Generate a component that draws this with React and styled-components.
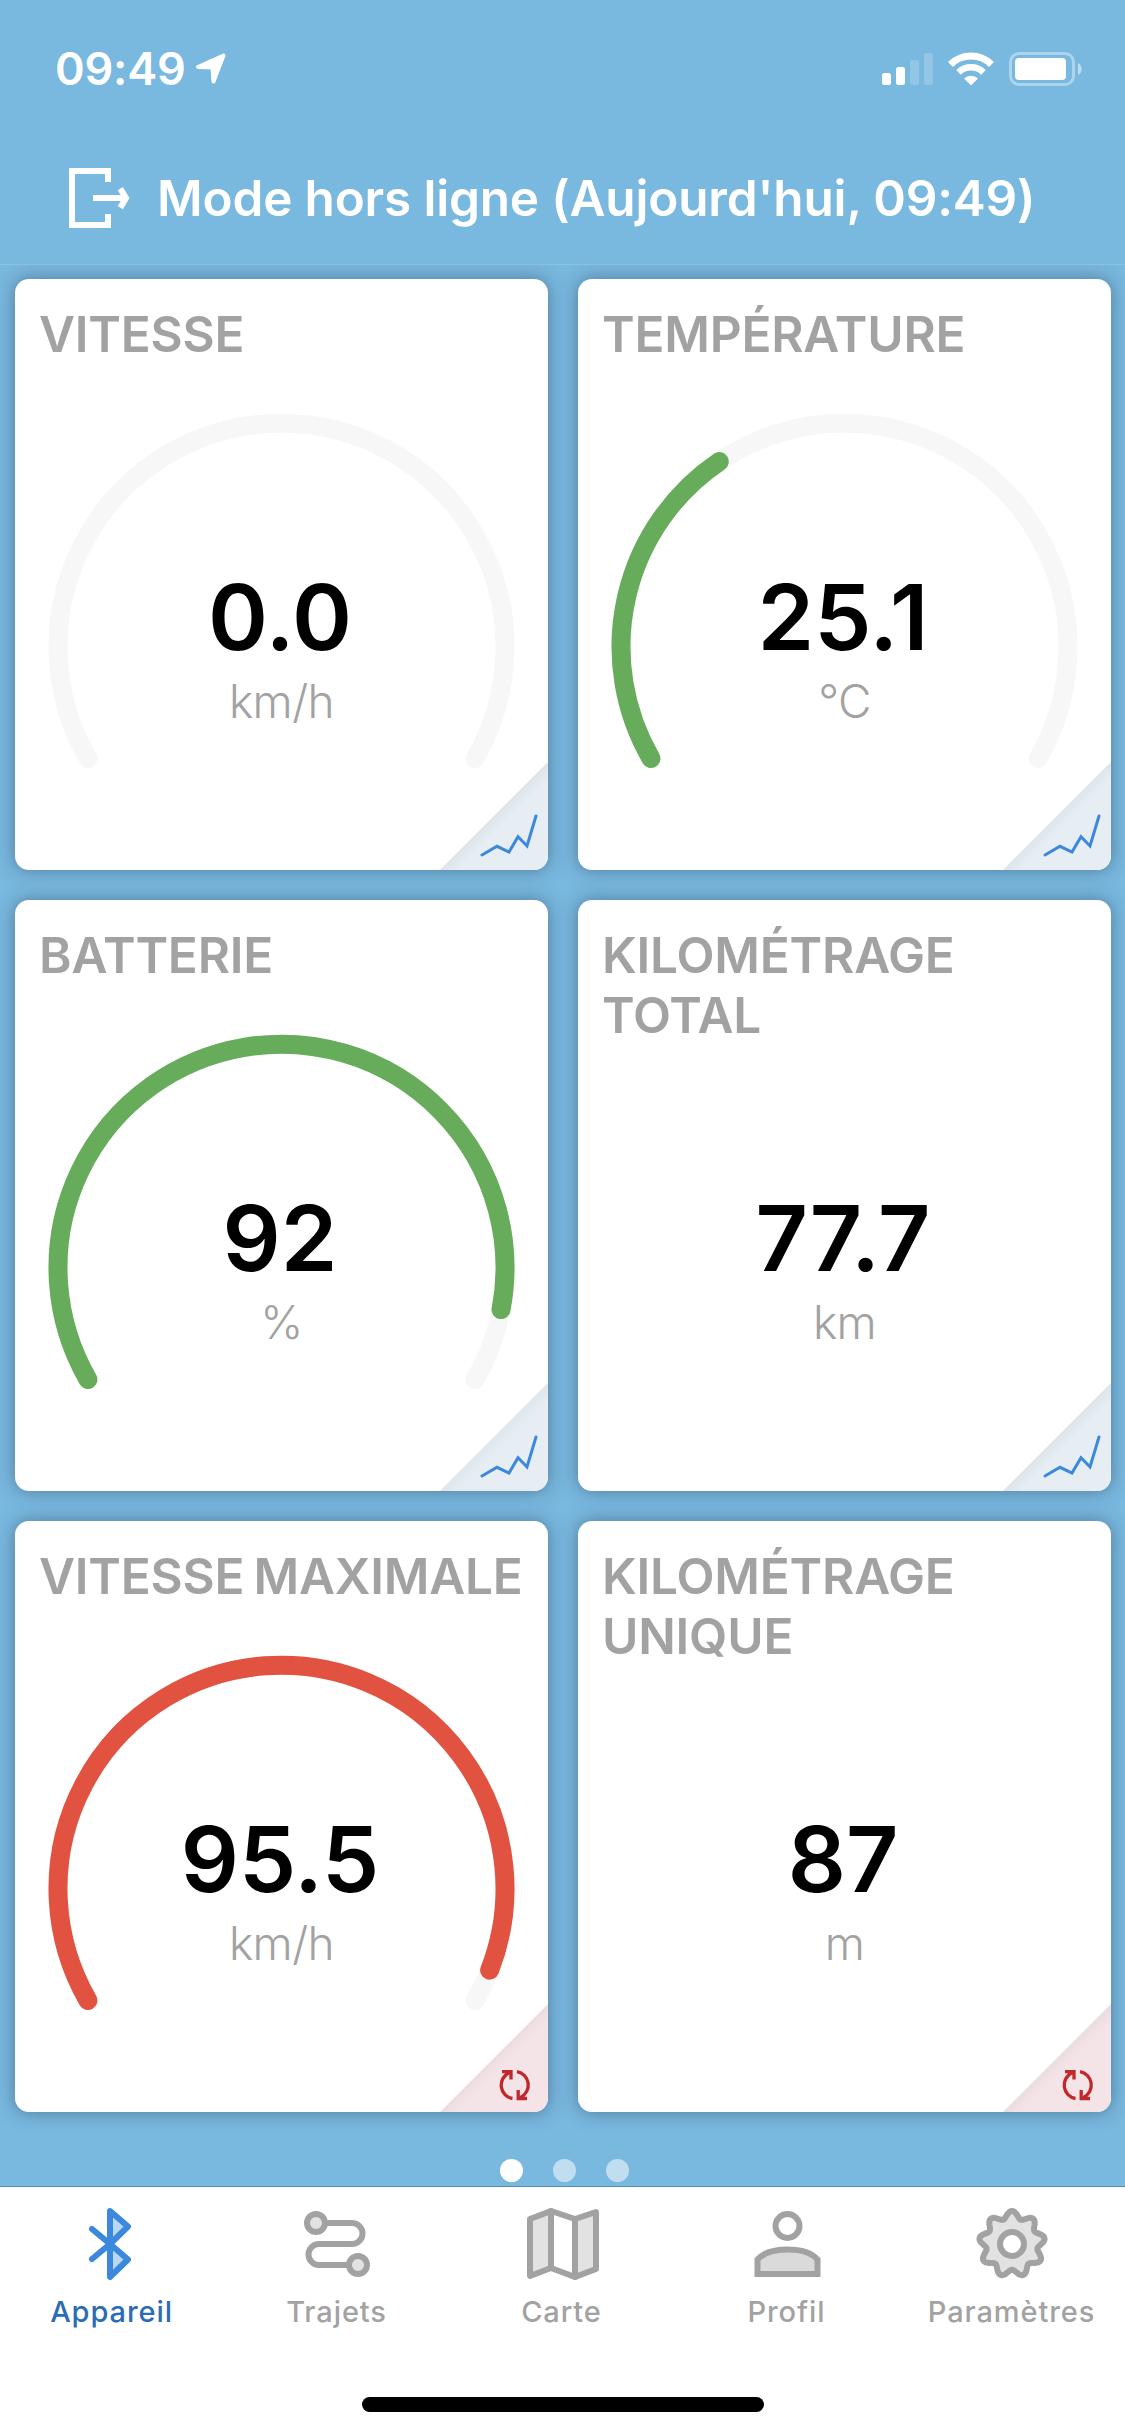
import React from 'react'
import styled, { createGlobalStyle } from 'styled-components'

const GlobalStyle=createGlobalStyle`
*{
  box-sizing:border-box;
}
body{
  margin:0;
  background:#79b8df;
  font-family:Inter, "Liberation Sans", sans-serif;
}
`
const Screen=styled.div`
width:1125px;
height:2436px;
display:flex;
flex-direction:column;
background:#79b8df;
overflow:hidden;
`
const StatusBar=styled.div`
height:132px;
padding:0 43px 0 55px;
display:flex;
align-items:center;
justify-content:space-between;
color:white;
`
const Clock=styled.div`
display:flex;
align-items:center;
gap:9px;
font-size:45px;
line-height:54px;
font-weight:600;
letter-spacing:-0.2px;
padding-top:6px;
`
const StatusIcons=styled.div`
display:flex;
align-items:center;
gap:15px;
padding-top:6px;
`
const Header=styled.header`
position:relative;
z-index:1;
height:133px;
padding:0 0 0 69px;
display:flex;
align-items:center;
gap:27px;
background:#79b8df;
border-bottom:1px solid #8bc0e1;
color:white;
`
const HeaderTitle=styled.h1`
margin:0;
font-size:49.5px;
line-height:60px;
font-weight:600;
letter-spacing:-0.18px;
white-space:nowrap;
`
const Grid=styled.main`
display:grid;
grid-template-columns:533px 533px;
grid-auto-rows:591px;
gap:30px;
padding:14px 14px 0 15px;
`
const Card=styled.section`
position:relative;
display:flex;
flex-direction:column;
background:white;
border-radius:14px;
box-shadow:0 0 18px rgba(40,60,85,0.5);
`
const CardTitle=styled.h2`
margin:0;
height:270px;
padding:25px 0 0 24px;
font-size:49.5px;
line-height:60px;
font-weight:600;
letter-spacing:-0.2px;
word-spacing:-3px;
white-space:nowrap;
color:#a2a2a2;
`
const Gauge=styled.svg`
position:absolute;
left:0;
top:0;
`
const Value=styled.div`
height:110px;
margin-top:13px;
padding-right:3px;
text-align:center;
font-size:91px;
line-height:110px;
font-weight:600;
color:black;
`
const Unit=styled.div`
padding-top:1px;
text-align:center;
font-size:46px;
line-height:56px;
font-weight:300;
letter-spacing:-0.6px;
color:#a2a2a2;
`
const Corner=styled.svg`
position:absolute;
right:0;
bottom:0;
border-bottom-right-radius:14px;
`
const Dots=styled.div`
height:74px;
flex:none;
display:flex;
justify-content:center;
align-items:flex-end;
gap:30px;
padding:0 0 4px 4px;
`
const Dot=styled.span`
width:23px;
height:23px;
border-radius:50%;
background:${props=>props.$active ? "white" : "#c1def1"};
`
const TabBar=styled.nav`
height:250px;
flex:none;
display:flex;
flex-direction:column;
align-items:center;
background:white;
border-top:1px solid #4d8cae;
`
const Tabs=styled.div`
width:100%;
height:210px;
display:grid;
grid-template-columns:repeat(5, 1fr);
`
const Tab=styled.div`
display:flex;
flex-direction:column;
align-items:center;
padding:18px 2px 0 0;
font-size:29px;
line-height:36px;
font-weight:500;
letter-spacing:0.9px;
color:${props=>props.$active ? "#2a6db4" : "#a2a2a2"};
svg{
  color:${props=>props.$active ? "#3b88dc" : "#a2a2a2"};
}
`
const TabLabel=styled.span`
margin-top:11px;
`
const HomeIndicator=styled.div`
width:402px;
height:15px;
border-radius:8px;
background:black;
`

const CX=266.5;
const CY=367.7;
const R=223.5;

// the dial opens downwards and sweeps 240 degrees
const arc=(ratio)=>{
  const point=(deg)=>{
    const a=deg*Math.PI/180;
    return `${(CX+R*Math.cos(a)).toFixed(2)} ${(CY+R*Math.sin(a)).toFixed(2)}`
  }
  const sweep=240*ratio;
  return `M${point(150)} A${R} ${R} 0 ${sweep>180 ? 1 : 0} 1 ${point(150+sweep)}`
}

const GREEN="#67ac5b";
const RED="#e15241";

const cards=[
  {id:1,title:["VITESSE"],value:"0.0",unit:"km/h",ratio:0,gauge:true,corner:"chart"},
  {id:2,title:["TEMPÉRATURE"],value:"25.1",unit:"°C",ratio:0.358,color:GREEN,gauge:true,corner:"chart"},
  {id:3,title:["BATTERIE"],value:"92",unit:"%",ratio:0.92,color:GREEN,gauge:true,corner:"chart"},
  {id:4,title:["KILOMÉTRAGE","TOTAL"],value:"77.7",unit:"km",corner:"chart"},
  {id:5,title:["VITESSE MAXIMALE"],value:"95.5",unit:"km/h",ratio:0.964,color:RED,gauge:true,corner:"reset"},
  {id:6,title:["KILOMÉTRAGE","UNIQUE"],value:"87",unit:"m",corner:"reset"},
]

const CornerAction=({type,id})=>{
  const reset=type==="reset";
  return (
    <Corner width="108" height="108" viewBox="0 0 108 108">
      <defs>
        <linearGradient id={`fold${id}`} gradientUnits="userSpaceOnUse" x1="54" y1="54" x2="63" y2="63">
          <stop offset="0" stopColor={reset ? "#ecdce0" : "#dde4ea"}/>
          <stop offset="1" stopColor={reset ? "#f4e4e7" : "#e6edf3"}/>
        </linearGradient>
      </defs>
      <path d="M108 0V108H0Z" fill={`url(#fold${id})`}/>
      {reset ? (
        <g fill="none" stroke="#c0282c" strokeWidth="3.3">
          <path d="M72.500 94.500A13.6 13.6 0 0 1 69 68.800M62 67.700H71V75.500"/>
          <path d="M77 67.700A13.6 13.6 0 0 1 80.500 93.400M87 94.500H78.200V86"/>
        </g>
      ) : (
        <path d="M42 93L57 84.3L69 90L78 74.8L87 84L96 54" fill="none" stroke="#3b88dc" strokeWidth="3" strokeLinecap="round"/>
      )}
    </Corner>
  )
}

const Metric=({item})=>(
  <Card>
    {item.gauge && (
      <Gauge width="533" height="591" viewBox="0 0 533 591" fill="none" strokeWidth="19" strokeLinecap="round">
        <path d={arc(1)} stroke="#f7f7f7"/>
        {item.ratio>0 && <path d={arc(item.ratio)} stroke={item.color}/>}
      </Gauge>
    )}
    <CardTitle>
      {item.title.map((line)=><div key={line}>{line}</div>)}
    </CardTitle>
    <Value>{item.value}</Value>
    <Unit>{item.unit}</Unit>
    <CornerAction type={item.corner} id={item.id}/>
  </Card>
)

const TabIcon=({children})=>(
  <svg width="78" height="78" viewBox="0 0 78 78" fill="none" stroke="currentColor" strokeWidth="6" strokeLinejoin="round" strokeLinecap="round">
    {children}
  </svg>
)

// nine rounded teeth around the hub
const gear=()=>{
  const pts=[];
  for(let i=0;i<=180;i++){
    const a=i*2*Math.PI/180;
    const r=29.4+3.6*Math.cos(9*a);
    pts.push(`${(39+r*Math.sin(a)).toFixed(2)} ${(39-r*Math.cos(a)).toFixed(2)}`);
  }
  return `M${pts.join("L")}Z`
}

const App = () => {
  return (
    <Screen>
      <GlobalStyle/>
      <StatusBar>
        <Clock>
          09:49
          <svg width="32" height="32" viewBox="0 0 32 32">
            <path d="M3 14L28.500 2.500L18.500 28.500L17.500 14.500Z" fill="white" stroke="white" strokeWidth="4" strokeLinejoin="round"/>
          </svg>
        </Clock>
        <StatusIcons>
          <svg width="51" height="34" viewBox="0 0 51 34" fill="white">
            <rect x="0" y="21" width="9" height="12" rx="2.5"/>
            <rect x="14" y="15" width="9" height="18" rx="2.5"/>
            <rect x="28" y="8" width="9" height="25" rx="2.5" opacity="0.2"/>
            <rect x="42" y="1" width="9" height="32" rx="2.5" opacity="0.2"/>
          </svg>
          <svg width="46" height="34" viewBox="0 0 46 34">
            <path d="M2.5 12.5A29 29 0 0 1 43.5 12.5" fill="none" stroke="white" strokeWidth="7"/>
            <path d="M10.5 20.3A18 18 0 0 1 35.5 20.3" fill="none" stroke="white" strokeWidth="6.5"/>
            <path d="M16 26.5A10 10 0 0 1 30 26.5L23 33.5Z" fill="white"/>
          </svg>
          <svg width="73" height="34" viewBox="0 0 73 34" fill="white">
            <rect x="1.5" y="1.5" width="63" height="31" rx="8.5" fill="none" stroke="white" strokeWidth="3" opacity="0.4"/>
            <rect x="6" y="6" width="51" height="22" rx="4"/>
            <path d="M69 11C74 13 74 21 69 23Z" opacity="0.5"/>
          </svg>
        </StatusIcons>
      </StatusBar>
      <Header>
        <svg width="61" height="60" viewBox="0 0 61 60" fill="none" stroke="white" strokeWidth="6">
          <path d="M39 14V3H3V57H39V46"/>
          <path d="M24 30H56M51.3 20.6L57 30L51.3 39.6"/>
        </svg>
        <HeaderTitle>Mode hors ligne (Aujourd'hui, 09:49)</HeaderTitle>
      </Header>
      <Grid>
        {cards.map((item)=><Metric item={item} key={item.id}/>)}
      </Grid>
      <Dots>
        <Dot $active/>
        <Dot/>
        <Dot/>
      </Dots>
      <TabBar>
        <Tabs>
          <Tab $active>
            <TabIcon>
              <path d="M37 39V6L55 21.5L37 39L55 54.5L37 72Z" fill="#b9d8f3"/>
              <path d="M19 24L37 39L19 54"/>
            </TabIcon>
            <TabLabel>Appareil</TabLabel>
          </Tab>
          <Tab>
            <TabIcon>
              <path d="M27 18H54A10.5 10.5 0 0 1 54 39H21A10.5 10.5 0 0 0 21 60H48"/>
              <circle cx="18" cy="18" r="9" fill="#e2e2e2"/>
              <circle cx="60" cy="60" r="9" fill="#e2e2e2"/>
            </TabIcon>
            <TabLabel>Trajets</TabLabel>
          </Tab>
          <Tab>
            <TabIcon>
              <path d="M7 14L28 6V63L7 71Z" fill="#e2e2e2"/>
              <path d="M52 14L73 7V64L52 72Z" fill="#e2e2e2"/>
              <path d="M28 6L52 14V72L28 63Z"/>
            </TabIcon>
            <TabLabel>Carte</TabLabel>
          </Tab>
          <Tab>
            <TabIcon>
              <circle cx="39.5" cy="21" r="12"/>
              <path d="M9.5 69V54.5C16.5 46.5 27.5 44.5 39.5 44.5S62.5 46.5 69.5 54.5V69Z" fill="#dadada" strokeLinejoin="miter"/>
            </TabIcon>
            <TabLabel>Profil</TabLabel>
          </Tab>
          <Tab>
            <TabIcon>
              <path d={gear()} fill="#e2e2e2"/>
              <circle cx="39" cy="39" r="12" fill="white"/>
            </TabIcon>
            <TabLabel>Paramètres</TabLabel>
          </Tab>
        </Tabs>
        <HomeIndicator/>
      </TabBar>
    </Screen>
  )
}

export default App
